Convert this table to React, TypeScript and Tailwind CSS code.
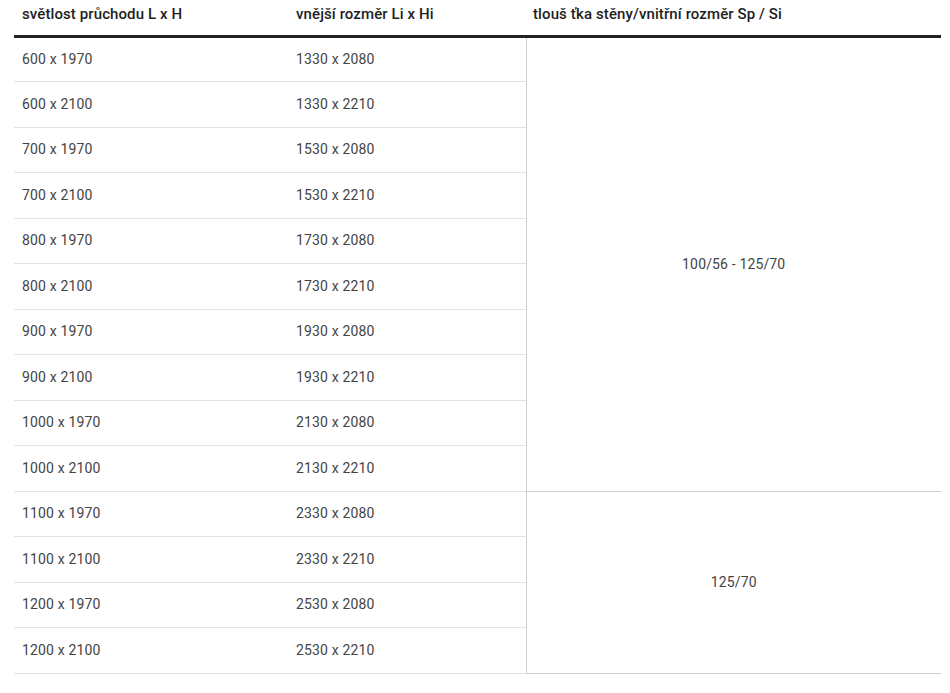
import React from "react"

const rows: [string, string][] = [
  ["600 x 1970", "1330 x 2080"],
  ["600 x 2100", "1330 x 2210"],
  ["700 x 1970", "1530 x 2080"],
  ["700 x 2100", "1530 x 2210"],
  ["800 x 1970", "1730 x 2080"],
  ["800 x 2100", "1730 x 2210"],
  ["900 x 1970", "1930 x 2080"],
  ["900 x 2100", "1930 x 2210"],
  ["1000 x 1970", "2130 x 2080"],
  ["1000 x 2100", "2130 x 2210"],
  ["1100 x 1970", "2330 x 2080"],
  ["1100 x 2100", "2330 x 2210"],
  ["1200 x 1970", "2530 x 2080"],
  ["1200 x 2100", "2530 x 2210"],
]

export default function App() {
  return (
    <div className="min-h-[693px] w-[950px] bg-white pl-[14px] font-['Roboto',sans-serif]">
      <table className="w-[927px] table-fixed border-collapse text-[14px] tracking-[0.15px] text-[#444]">
        <colgroup>
          <col className="w-[274px]" />
          <col className="w-[238px]" />
          <col className="w-[415px]" />
        </colgroup>
        <thead>
          <tr className="border-b-[3px] border-[#222]">
            <th className="h-[36px] pl-2 pt-[4px] text-left align-top text-[15px] font-medium leading-[20px] tracking-[0.1px] text-[#1e1e1e]">
              světlost průchodu L x H
            </th>
            <th className="h-[36px] pl-2 pt-[4px] text-left align-top text-[15px] font-medium leading-[20px] tracking-[0.1px] text-[#1e1e1e]">
              vnější rozměr Li x Hi
            </th>
            <th className="h-[36px] pl-[7px] pt-[4px] text-left align-top text-[15px] font-medium leading-[20px] tracking-[0.1px] text-[#1e1e1e]">
              tlouš ťka stěny/vnitřní rozměr Sp / Si
            </th>
          </tr>
        </thead>
        <tbody>
          {rows.map(([a, b], i) => (
            <tr key={a} className="h-[45.5px]">
              <td className="border-b border-[#e2e2e2] pl-2 align-middle">{a}</td>
              <td className="border-b border-[#e2e2e2] pl-2 align-middle">{b}</td>
              {i === 0 && (
                <td rowSpan={10} className="border-b border-l border-[#cfcfcf] text-center align-middle">
                  100/56 - 125/70
                </td>
              )}
              {i === 10 && (
                <td rowSpan={4} className="border-b border-l border-[#cfcfcf] text-center align-middle">
                  125/70
                </td>
              )}
            </tr>
          ))}
        </tbody>
      </table>
    </div>
  )
}
